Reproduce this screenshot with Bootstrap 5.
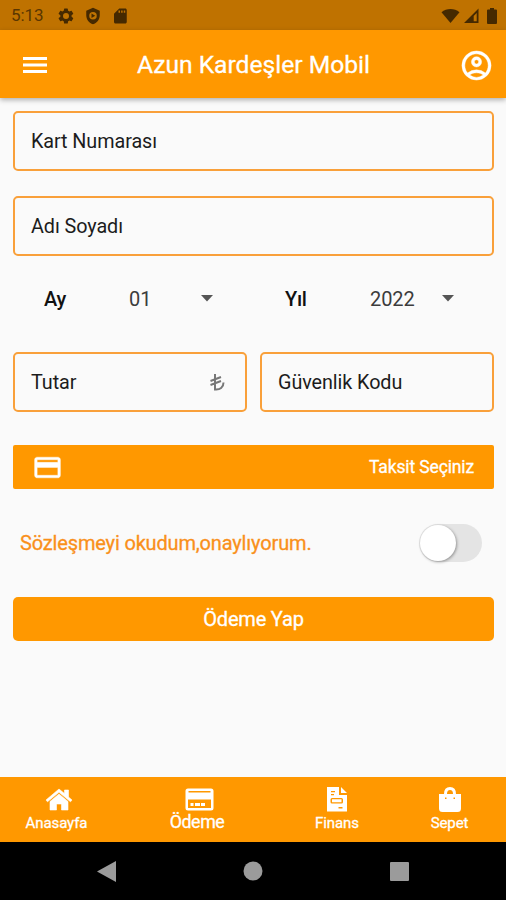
<!DOCTYPE html>
<html lang="tr">
<head>
<meta charset="utf-8">
<meta name="viewport" content="width=device-width, initial-scale=1">
<title>Azun Kardeşler Mobil</title>
<link rel="stylesheet" href="https://cdn.jsdelivr.net/npm/bootstrap@5.3.0/dist/css/bootstrap.min.css">
<style>
  :root { --brand: #ff9800; }
  body { font-family: Roboto, "Noto Sans", sans-serif; background: #fafafa; color: #1c1c1c; line-height: 1.2; }
  .screen { width: 506px; height: 900px; }
  svg { display: block; flex: none; fill: currentColor; }
  .brand-bg { background: var(--brand); color: #fff; }
  .soft-bold { -webkit-text-stroke: .3px currentColor; }
  .status { height: 30px; background: #bf7200; color: #452900; padding: 1px 9px 0 11px; }
  .clock { font-size: 17px; width: 46px; color: #5a3600; letter-spacing: -.1px; }
  .appbar { height: 68px; padding: 2px 12px 0 19px; box-shadow: 0 2px 5px rgba(0,0,0,.3); }
  .appbar h1 { font-size: 24.6px; font-weight: 400; margin-right: 3px; }
  .form-area { padding: 13px 12px 0 13px; }
  .outlined { height: 60px; border: 2px solid #f9a03a; border-radius: 5px; padding: 1px 20px 0 16px; font-size: 19.8px; letter-spacing: -.08px; }
  .gap-fields { gap: 25px; }
  .pickers { height: 96px; padding-bottom: 11px; font-size: 20px; }
  .pick-label { font-weight: 500; color: #111; width: 85px; letter-spacing: -.3px; }
  .pick-value { color: #3c3c3c; width: 72px; letter-spacing: -.1px; }
  .left-pick { width: 241px; padding-left: 31px; }
  .right-pick { padding-left: 31px; }
  .pair { gap: 13px; }
  .install { height: 44px; margin-top: 33px; border-radius: 2px; padding: 0 20px 0 19px; font-size: 17.5px; letter-spacing: -.13px; }
  .consent { height: 108px; padding: 0 12px 0 7px; color: #f9901a; font-size: 20px; letter-spacing: -.16px; }
  .toggle { width: 63px; height: 38px; border-radius: 19px; background: #e4e4e4; padding: 1px; }
  .knob { width: 36px; height: 36px; border-radius: 50%; background: #fff; box-shadow: 1px 1px 3px rgba(0,0,0,.35); }
  .pay { height: 44px; border-radius: 5px; font-size: 20px; letter-spacing: -.2px; }
  .tabs { height: 65px; display: grid; grid-template-columns: 113px 168px 112px 113px; font-size: 15px; letter-spacing: -.1px; }
  .tab-item { padding-top: 10px; height: 64px; gap: 2px; }
  .tab-active { font-size: 17.8px; gap: 0; letter-spacing: -.4px; }
  .tab-active span { margin-top: -1px; }
  .sysbar { height: 58px; background: #000; color: #9b9b9b; gap: 127px; }
</style>
<script src="https://cdn.jsdelivr.net/npm/bootstrap@5.3.0/dist/js/bootstrap.bundle.min.js"></script>
</head>
<body>
<div class="screen d-flex flex-column overflow-hidden">
  <div class="status d-flex align-items-center">
    <span class="clock">5:13</span>
    <svg width="18" height="18" viewBox="0 0 24 24"><path fill-rule="evenodd" d="M19.4 13c.1-.7.1-1.300 0-2l2.100-1.600c.2-.2.2-.4.1-.6l-2-3.500c-.1-.2-.4-.3-.6-.2l-2.500 1a7 7 0 0 0-1.700-1l-.4-2.600a.5.5 0 0 0-.5-.5h-4a.5.5 0 0 0-.5.5L9 5.100a8 8 0 0 0-1.700 1l-2.500-1c-.2-.1-.5 0-.6.2l-2 3.500c-.1.2-.1.5.1.6L4.500 11c-.1.7-.1 1.300 0 2l-2.200 1.600c-.2.200-.2.400-.1.600l2 3.500c.1.200.4.300.6.200l2.500-1c.5.400 1.100.700 1.700 1l.4 2.600c0 .300.200.5.5.5h4c.300 0 .5-.2.5-.5l.4-2.600c.6-.3 1.200-.6 1.700-1l2.500 1c.200.1.5 0 .6-.2l2-3.500c.1-.2.1-.5-.1-.6zM12 16a4 4 0 1 1 0-8 4 4 0 0 1 0 8z"/></svg>
    <svg class="ms-2" width="20" height="18" viewBox="0 0 24 24"><path fill-rule="evenodd" d="M12 1 3 5v6c0 5.500 3.800 10.700 9 12 5.200-1.300 9-6.500 9-12V5zm0 5.500a5 5 0 1 1 0 10 5 5 0 0 1 0-10zM10 8.500v6l5-3z"/></svg>
    <svg class="ms-2" width="18" height="18" viewBox="0 0 24 24"><path fill-rule="evenodd" d="M19 2h-8L4 9v11c0 1.100.9 2 2 2h13c1.100 0 2-.9 2-2V4c0-1.100-.9-2-2-2zM10 4.500h2v3h-2zm3.500 0h2v3h-2zm3.500 0h2v3h-2z"/></svg>
    <svg class="ms-auto" width="19" height="16" viewBox="0 0 19 16"><path d="M.5 4.200C5.500-.1 13.500-.1 18.500 4.200L9.500 15z"/></svg>
    <svg class="ms-1" width="15" height="16" viewBox="0 0 15 16"><path fill-rule="evenodd" d="M14.500.5V15H0zM12.700 5 9.700 8v5.300h3z"/></svg>
    <svg class="ms-2" width="10" height="16" viewBox="0 0 10 16"><path d="M3 0h4v1.600h2q1 0 1 1V15q0 1-1 1H1q-1 0-1-1V2.600q0-1 1-1h2z"/></svg>
  </div>

  <header class="appbar brand-bg d-flex align-items-center justify-content-between">
    <svg width="32" height="32" viewBox="0 0 24 24"><path d="M3 18h18v-2.300H3zm0-4.850h18v-2.300H3zM3 6v2.300h18V6z"/></svg>
    <h1 class="mb-0 soft-bold">Azun Kardeşler Mobil</h1>
    <svg width="35" height="35" viewBox="0 0 24 24" stroke="currentColor" stroke-width=".3"><path d="M12 2a10 10 0 1 0 0 20 10 10 0 0 0 0-20zM7.350 18.500C8.660 17.560 10.260 17 12 17s3.340.56 4.650 1.500a8 8 0 0 1-9.300 0zm10.790-1.380a9.950 9.950 0 0 0-12.280 0A8 8 0 1 1 20 12c0 1.950-.7 3.730-1.860 5.120zM12 6a3.500 3.500 0 1 0 0 7 3.500 3.500 0 0 0 0-7zm0 5a1.500 1.500 0 1 1 0-3 1.500 1.500 0 0 1 0 3z"/></svg>
  </header>

  <main class="form-area flex-grow-1">
    <div class="d-flex flex-column gap-fields">
      <div class="outlined d-flex align-items-center">Kart Numarası</div>
      <div class="outlined d-flex align-items-center">Adı Soyadı</div>
    </div>
    <div class="pickers d-flex align-items-center">
      <div class="left-pick d-flex align-items-center">
        <span class="pick-label">Ay</span><span class="pick-value">01</span>
        <svg width="12" height="7" viewBox="0 0 12 7"><path fill="#555" d="M0 0h12L6 6.500z"/></svg>
      </div>
      <div class="right-pick d-flex align-items-center">
        <span class="pick-label">Yıl</span><span class="pick-value">2022</span>
        <svg width="12" height="7" viewBox="0 0 12 7"><path fill="#555" d="M0 0h12L6 6.500z"/></svg>
      </div>
    </div>
    <div class="pair d-flex">
      <div class="outlined d-flex align-items-center justify-content-between w-50">Tutar
        <svg width="15" height="17" viewBox="0 0 15 17" stroke="#777" stroke-width="2"><path fill="none" d="M5 0v15.500c5 .5 8.500-2 8.500-7M.5 7 11 3M.5 11 11 7"/></svg>
      </div>
      <div class="outlined d-flex align-items-center w-50">Güvenlik Kodu</div>
    </div>
    <div class="install brand-bg d-flex align-items-center justify-content-between">
      <svg width="31" height="31" viewBox="0 0 24 24" stroke="currentColor" stroke-width=".3"><path d="M20 4H4c-1.110 0-2 .89-2 2v12c0 1.110.89 2 2 2h16c1.110 0 2-.89 2-2V6c0-1.110-.89-2-2-2zm0 14H4v-6h16zm0-10H4V6h16z"/></svg>
      <span class="soft-bold">Taksit Seçiniz</span>
    </div>
    <div class="consent d-flex align-items-center justify-content-between">
      <span class="soft-bold">Sözleşmeyi okudum,onaylıyorum.</span>
      <div class="toggle" role="switch" aria-checked="false"><div class="knob"></div></div>
    </div>
    <div class="pay brand-bg d-flex align-items-center justify-content-center"><span class="soft-bold">Ödeme Yap</span></div>
  </main>

  <nav class="tabs brand-bg">
    <div class="tab-item d-flex flex-column align-items-center">
      <svg class="ms-1" width="28" height="25" viewBox="0 0 28 25"><path d="M14 2 1 13l1.500 1.800L14 5.300l11.500 9.500L27 13l-3.500-3V3h-4v3.600zM14 7 5 14.500V23h6.500v-6h5v6H23v-8.500z" stroke="currentColor" stroke-width=".6" stroke-linejoin="round"/></svg>
      <span class="soft-bold">Anasayfa</span>
    </div>
    <div class="tab-item tab-active d-flex flex-column align-items-center">
      <svg class="ms-1" width="29" height="25" viewBox="0 0 29 25"><path fill-rule="evenodd" d="M3 1.500h23q2.500 0 2.500 2.500v17q0 2.500-2.500 2.500H3Q.5 23.500.5 21V4Q.5 1.500 3 1.500zM3.500 4v1.500h22V4zm-.5 8.500v8.500h23v-8.500zM5.500 16h3v3h-3zm4.500 0h5v3h-5zm6 0h4v3h-4z"/></svg>
      <span class="soft-bold">Ödeme</span>
    </div>
    <div class="tab-item d-flex flex-column align-items-center">
      <svg width="20" height="25" viewBox="0 0 20 25"><path fill-rule="evenodd" d="M0 0h12v8h8v16.500H0zM14 0l6 6h-6zM4 4v1.200h4V4zm0 3v1.200h3V7zm1 4q-1.500 0-1.500 1.500V15q0 1.500 1.500 1.500h9.500q1.500 0 1.500-1.500v-2.500q0-1.500-1.500-1.500zm0 1.200h9.500V15.300H5zM11.500 20v1.500h4V20z"/></svg>
      <span class="soft-bold">Finans</span>
    </div>
    <div class="tab-item d-flex flex-column align-items-center">
      <svg width="22" height="25" viewBox="0 0 22 25"><path fill-rule="evenodd" d="M5 7q0-7 6-7t6 7h5v14.500q0 3.500-3.500 3.500h-15Q0 25 0 21.500V7zm3 0h6Q14 3 11 3T8 7zM6 10.500v1.500h1.500v-1.500zm8.500 0v1.500H16v-1.500z"/></svg>
      <span class="soft-bold">Sepet</span>
    </div>
  </nav>
  <div class="sysbar d-flex align-items-center justify-content-center">
    <svg width="19" height="21" viewBox="0 0 19 21"><path d="M19 0v21L0 10.500z"/></svg>
    <svg width="20" height="20" viewBox="0 0 20 20"><circle cx="10" cy="10" r="9.500"/></svg>
    <svg width="19" height="19" viewBox="0 0 19 19"><rect width="19" height="19" rx="1"/></svg>
  </div>
</div>
</body>
</html>
